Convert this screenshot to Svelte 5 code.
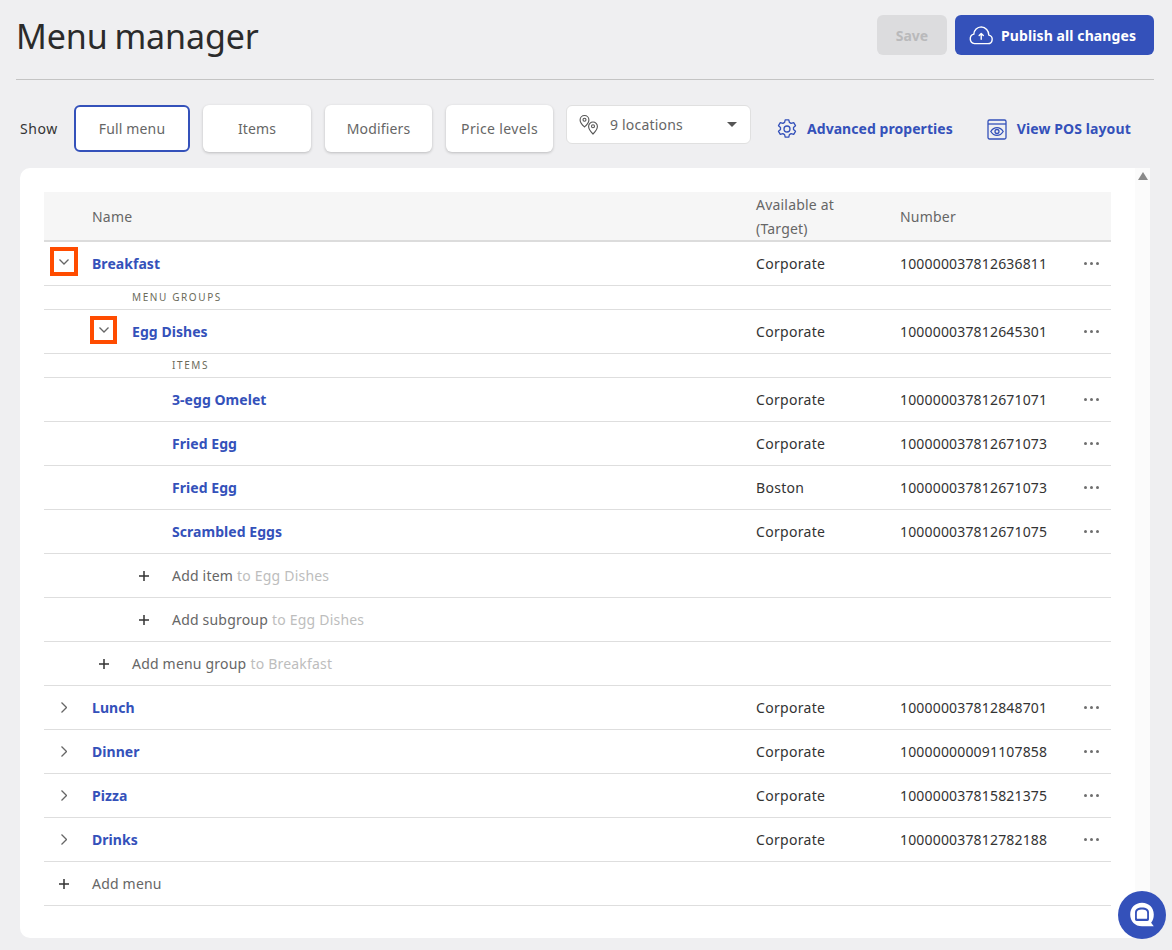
<script>
  const rows = [
    { t: 'row', lvl: 0, name: 'Breakfast', at: 'Corporate', num: '100000037812636811', tog: 'open', hl: 'a' },
    { t: 'label', lvl: 1, name: 'MENU GROUPS' },
    { t: 'row', lvl: 1, name: 'Egg Dishes', at: 'Corporate', num: '100000037812645301', tog: 'open', hl: 'b' },
    { t: 'label', lvl: 2, name: 'ITEMS' },
    { t: 'row', lvl: 2, name: '3-egg Omelet', at: 'Corporate', num: '100000037812671071' },
    { t: 'row', lvl: 2, name: 'Fried Egg', at: 'Corporate', num: '100000037812671073' },
    { t: 'row', lvl: 2, name: 'Fried Egg', at: 'Boston', num: '100000037812671073' },
    { t: 'row', lvl: 2, name: 'Scrambled Eggs', at: 'Corporate', num: '100000037812671075' },
    { t: 'add', lvl: 2, name: 'Add item', to: 'to Egg Dishes' },
    { t: 'add', lvl: 2, name: 'Add subgroup', to: 'to Egg Dishes' },
    { t: 'add', lvl: 1, name: 'Add menu group', to: 'to Breakfast' },
    { t: 'row', lvl: 0, name: 'Lunch', at: 'Corporate', num: '100000037812848701', tog: 'closed' },
    { t: 'row', lvl: 0, name: 'Dinner', at: 'Corporate', num: '100000000091107858', tog: 'closed' },
    { t: 'row', lvl: 0, name: 'Pizza', at: 'Corporate', num: '100000037815821375', tog: 'closed' },
    { t: 'row', lvl: 0, name: 'Drinks', at: 'Corporate', num: '100000037812782188', tog: 'closed' },
    { t: 'add', lvl: 0, name: 'Add menu', to: '' }
  ];
  const tabs = ['Full menu', 'Items', 'Modifiers', 'Price levels'];
</script>

<div class="page">
  <header class="top">
    <h1>Menu manager</h1>
    <div class="actions">
      <button class="save">Save</button>
      <button class="publish">
        <svg width="26" height="26" viewBox="0 0 24 24" fill="none" stroke="#fff" stroke-width="1.3" stroke-linecap="round" stroke-linejoin="round">
          <path d="M6 20h12.200a4 4 0 0 0 1-7.900A7.400 7.400 0 0 0 12.200 4.500a7 7 0 0 0-6.800 6.700A4.500 4.500 0 0 0 6 20z"/>
          <path d="M12.200 16v-5.500M10.300 12.400l1.900-1.900 1.900 1.900"/>
        </svg>
        <span>Publish all changes</span>
      </button>
    </div>
  </header>

  <div class="toolbar">
    <span class="show">Show</span>
    {#each tabs as tab, i}
      <button class="tab tab-{i}" class:active={i === 0}>{tab}</button>
    {/each}
    <div class="select">
      <svg width="22" height="22" viewBox="0 0 22 22" fill="none" stroke="#555" stroke-width="1.1">
        <path d="M6.500 1.500a4.400 4.400 0 0 0-4.400 4.400c0 3 4.400 7 4.400 7s4.400-4 4.400-7a4.400 4.400 0 0 0-4.400-4.400z"/>
        <circle cx="6.500" cy="5.800" r="1.500"/>
        <path d="M15 8a4.400 4.400 0 0 0-4.400 4.400c0 3 4.400 7.600 4.400 7.600s4.400-4.600 4.400-7.600A4.400 4.400 0 0 0 15 8z" fill="#fff"/>
        <circle cx="15" cy="12.300" r="1.500"/>
      </svg>
      <span class="sel-text">9 locations</span>
      <span class="caret"></span>
    </div>
    <a class="link adv" href="#a">
      <svg width="20" height="22" viewBox="0 0 20 22" fill="none" stroke="#3451ba" stroke-width="1.3" stroke-linejoin="round">
        <path d="M8.200 1.800h3.600l.6 2.600 1.700 1 2.600-.8 1.800 3.100-2 1.800v2l2 1.800-1.800 3.100-2.600-.8-1.700 1-.6 2.600H8.200l-.6-2.600-1.700-1-2.600.8-1.800-3.100 2-1.800v-2l-2-1.800 1.800-3.100 2.600.8 1.700-1z"/>
        <circle cx="10" cy="11" r="3"/>
      </svg>
      <span class="adv-text">Advanced properties</span>
    </a>
    <a class="link pos" href="#b">
      <svg width="20" height="22" viewBox="0 0 20 22" fill="none" stroke="#3451ba" stroke-width="1.3">
        <rect x="1" y="2" width="18" height="19" rx="1.500"/>
        <path d="M1 6h18"/>
        <path d="M3.800 13.500c1.600-2.600 3.700-3.900 6.200-3.900s4.600 1.300 6.200 3.900c-1.600 2.600-3.700 3.900-6.200 3.900s-4.600-1.300-6.200-3.900z"/>
        <circle cx="10" cy="13.500" r="2"/>
      </svg>
      <span class="pos-text">View POS layout</span>
    </a>
  </div>

  <main class="card">
    <div class="scroll"><span class="up"></span></div>
    <div class="thead grid">
      <div class="th-name">Name</div>
      <div>Available at<br />(Target)</div>
      <div>Number</div>
    </div>
    {#each rows as r}
      {#if r.t === 'label'}
        <div class="sub lvl-{r.lvl}">{r.name}</div>
      {:else if r.t === 'add'}
        <div class="row add lvl-{r.lvl}">
          <span class="ic">
            <svg width="10" height="10" viewBox="0 0 10 10" stroke="#333" stroke-width="1.500"><path d="M5 0v10M0 5h10"/></svg>
          </span>
          <span class="addname">{r.name}</span>
          {#if r.to}<span class="to">{r.to}</span>{/if}
        </div>
      {:else}
        <div class="row grid">
          <div class="cell lvl-{r.lvl}">
            <span class="ic">
              {#if r.tog === 'open'}
                <span class="tog hl-{r.hl}">
                  <svg width="10" height="6" viewBox="0 0 10 6" fill="none" stroke="#666" stroke-width="1.300"><path d="M.5.500 5 5l4.500-4.500"/></svg>
                </span>
              {:else if r.tog === 'closed'}
                <svg width="6" height="11" viewBox="0 0 6 11" fill="none" stroke="#666" stroke-width="1.300"><path d="M.5.500 5.500 5.500l-5 5"/></svg>
              {/if}
            </span>
            <a class="name" href="#r">{r.name}</a>
          </div>
          <div class="val">{r.at}</div>
          <div class="num">{r.num}</div>
          <div class="dots"><i></i><i></i><i></i></div>
        </div>
      {/if}
    {/each}
  </main>

  <button class="chat" aria-label="Chat">
    <svg width="30" height="30" viewBox="0 0 28 28" fill="none">
      <path d="M14 2.500C7.500 2.500 3 7.200 3 13.500s4.500 11 11 11h11l-2.500-3.200c1.700-2 2.500-4.700 2.500-7.800C25 7.200 20.500 2.500 14 2.500z" fill="#fff"/>
      <path d="M14 7c-4 0-6.500 1.500-6.500 4.500v6.500c0 1 .6 1.500 1.500 1.500h10c.9 0 1.500-.5 1.500-1.500v-6.500C20.500 8.500 18 7 14 7z" fill="#3451ba"/>
      <path d="M14 8.800c-3 0-4.800 1-4.800 3v5c0 .5.300.8.800.8h8c.5 0 .8-.3.800-.8v-5c0-2-1.800-3-4.800-3z" fill="#fff"/>
    </svg>
  </button>
</div>

<style>
  :global(body) {
    margin: 0;
    background: #efeff1;
    font-family: "Noto Sans", "Liberation Sans", sans-serif;
    color: #333;
  }
  .page {
    position: relative;
    height: 950px;
    overflow: hidden;
    font-size: 14px;
  }
  .top {
    margin: 0 18px 0 16px;
    height: 79px;
    border-bottom: 1px solid #c4c4c4;
    display: flex;
    justify-content: space-between;
    align-items: flex-start;
  }
  h1 {
    margin: 12px 0 0;
    font-size: 34px;
    line-height: 48px;
    font-weight: 400;
    color: #2b2b2b;
    letter-spacing: -0.1px;
    word-spacing: -2px;
  }
  .actions {
    display: flex;
    gap: 8px;
    margin-top: 15px;
  }
  button {
    font: inherit;
    border: 0;
  }
  .save {
    width: 70px;
    height: 40px;
    border-radius: 6px;
    background: #dcdcde;
    color: #b9b9bb;
    font-weight: 700;
  }
  .publish {
    width: 199px;
    height: 40px;
    border-radius: 6px;
    background: #3451ba;
    color: #fff;
    font-weight: 700;
    display: flex;
    align-items: center;
    padding: 0 0 0 13px;
    gap: 7px;
  }
  .publish span { letter-spacing: 0.1px; }
  .toolbar {
    display: flex;
    align-items: flex-start;
    margin-top: 25px;
    padding-left: 20px;
    height: 63px;
  }
  .show {
    width: 54px;
    line-height: 47px;
    color: #333;
    letter-spacing: 0.6px;
  }
  .tab {
    height: 47px;
    margin-right: 14px;
    border-radius: 6px;
    background: #fff;
    color: #666;
    box-shadow: 0 1px 3px rgba(0, 0, 0, 0.22);
    padding: 0;
    letter-spacing: 0.15px;
  }
  .tab-0 { width: 116px; margin-right: 13px; }
  .tab-1 { width: 108px; }
  .tab-2 { width: 107px; }
  .tab-3 { width: 107px; margin-right: 13px; letter-spacing: 0.35px; }
  .tab.active {
    border: 2px solid #3451ba;
    box-shadow: none;
  }
  .select {
    width: 185px;
    height: 39px;
    box-sizing: border-box;
    border: 1px solid #e0e0e0;
    border-radius: 6px;
    background: #fff;
    display: flex;
    align-items: center;
    padding: 0 13px 0 11px;
    color: #666;
  }
  .sel-text {
    margin-left: 10px;
    flex: 1;
    line-height: 38px;
    letter-spacing: 0.2px;
  }
  .caret {
    border: 5px solid transparent;
    border-top-color: #555;
    border-bottom: 0;
  }
  .link {
    display: flex;
    align-items: center;
    gap: 10px;
    height: 47px;
    font-weight: 700;
    color: #3451ba;
    text-decoration: none;
  }
  .adv { margin-left: 26px; }
  .adv-text { letter-spacing: 0.05px; }
  .pos { margin-left: 34px; }
  .pos-text { letter-spacing: 0.1px; }
  .card {
    position: relative;
    margin: 0 22px 0 20px;
    height: 746px;
    padding: 24px 39px 0 24px;
    background: #fff;
    border-radius: 10px;
  }
  .scroll {
    position: absolute;
    top: 0;
    right: 0;
    bottom: 30px;
    width: 15px;
    background: #fbfbfb;
  }
  .up {
    display: block;
    margin: 4px auto 0;
    width: 0;
    border: 5px solid transparent;
    border-top: 0;
    border-bottom: 8px solid #8a8a8a;
  }
  .grid {
    display: grid;
    grid-template-columns: 712px 144px 1fr 40px;
    align-items: center;
  }
  .thead {
    background: #f6f6f6;
    height: 47px;
    padding-top: 1px;
    border-bottom: 2px solid #dcdcdc;
    color: #666;
    line-height: 24px;
    letter-spacing: 0.2px;
  }
  .th-name { padding-left: 48px; }
  .row {
    height: 43px;
    border-bottom: 1px solid #dedede;
  }
  .row.add {
    display: flex;
    align-items: center;
    color: #666;
    letter-spacing: 0.2px;
  }
  .cell {
    display: flex;
    align-items: center;
    height: 100%;
  }
  .lvl-1 { padding-left: 40px; }
  .lvl-2 { padding-left: 80px; }
  .ic {
    flex: none;
    width: 40px;
    margin-right: 8px;
    display: flex;
    align-items: center;
    justify-content: center;
  }
  .tog {
    display: flex;
    align-items: center;
    justify-content: center;
    box-sizing: border-box;
    border: 4px solid #ff4c00;
  }
  .hl-a { width: 28px; height: 29px; margin-bottom: 4px; }
  .hl-b { width: 27px; height: 28px; margin-bottom: 4px; margin-left: -1px; }
  .name {
    font-weight: 700;
    color: #3451ba;
    text-decoration: none;
    letter-spacing: 0.05px;
  }
  .to {
    color: #bdbdbd;
    margin-left: 4px;
  }
  .sub {
    height: 23px;
    border-bottom: 1px solid #dedede;
    font-size: 10px;
    letter-spacing: 1.6px;
    line-height: 22px;
    color: #6b6b5a;
    text-indent: 48px;
  }
  .val { letter-spacing: 0.3px; }
  .num { color: #333; letter-spacing: 0.17px; }
  .dots {
    display: flex;
    gap: 3px;
    justify-content: center;
  }
  .dots i {
    width: 3px;
    height: 3px;
    border-radius: 50%;
    background: #6e6e6e;
    margin-bottom: 1px;
  }
  .chat {
    position: absolute;
    left: 1118px;
    top: 891px;
    width: 48px;
    height: 48px;
    border-radius: 50%;
    background: #3451ba;
    padding: 0;
    display: flex;
    align-items: center;
    justify-content: center;
  }
</style>
